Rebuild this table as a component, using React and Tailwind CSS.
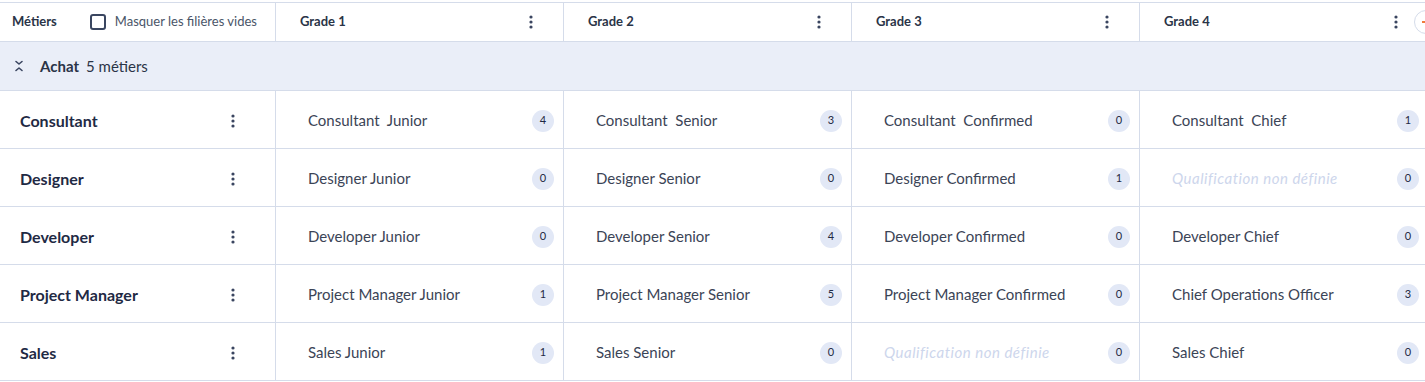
import React from "react";

const grades = ["Grade 1", "Grade 2", "Grade 3", "Grade 4"];

const metiers = [
  {
    name: "Consultant",
    cells: [
      ["Consultant  Junior", 4],
      ["Consultant  Senior", 3],
      ["Consultant  Confirmed", 0],
      ["Consultant  Chief", 1],
    ],
  },
  {
    name: "Designer",
    cells: [
      ["Designer Junior", 0],
      ["Designer Senior", 0],
      ["Designer Confirmed", 1],
      [null, 0],
    ],
  },
  {
    name: "Developer",
    cells: [
      ["Developer Junior", 0],
      ["Developer Senior", 4],
      ["Developer Confirmed", 0],
      ["Developer Chief", 0],
    ],
  },
  {
    name: "Project Manager",
    cells: [
      ["Project Manager Junior", 1],
      ["Project Manager Senior", 5],
      ["Project Manager Confirmed", 0],
      ["Chief Operations Officer", 3],
    ],
  },
  {
    name: "Sales",
    cells: [
      ["Sales Junior", 1],
      ["Sales Senior", 0],
      [null, 0],
      ["Sales Chief", 0],
    ],
  },
];

const Dots = () => (
  <svg width="4" height="14" viewBox="0 0 4 14" className="text-[#3a4560]">
    <circle cx="2" cy="2" r="1.6" fill="currentColor" />
    <circle cx="2" cy="7" r="1.6" fill="currentColor" />
    <circle cx="2" cy="12" r="1.6" fill="currentColor" />
  </svg>
);

const Collapse = () => (
  <svg width="10" height="12" viewBox="0 0 10 12" fill="none" stroke="#3a4560" strokeWidth="1.6" strokeLinecap="round" strokeLinejoin="round">
    <path d="M2 1.5 L5 4 L8 1.5" />
    <path d="M2 10.5 L5 8 L8 10.5" />
  </svg>
);

const Badge = ({ n }) => (
  <span className="flex h-[22px] w-[22px] shrink-0 items-center justify-center rounded-full bg-[#e2e8f6] text-[11px] text-[#1f2a44]">
    {n}
  </span>
);

export default function App() {
  return (
    <div
      className="w-[1425px] h-[382px] overflow-hidden bg-white pt-[2px] text-[#2a3447]"
      style={{ fontFamily: "Lato, 'Noto Sans', sans-serif" }}
    >
      <div className="w-[1428px] border-t border-[#d5dcea]">
        {/* Header */}
        <div className="flex h-[39px] border-b border-[#d5dcea]">
          <div className="flex w-[276px] shrink-0 items-center border-r border-[#d5dcea] pl-[12px]">
            <span className="text-[13px] font-bold">Métiers</span>
            <span className="ml-[33px] h-[16px] w-[16px] rounded-[3px] border-2 border-[#3a4660]" />
            <span className="ml-[9px] text-[13px] text-[#4a5568]">Masquer les filières vides</span>
          </div>
          {grades.map((g, i) => (
            <div
              key={g}
              className={`relative flex w-[288px] shrink-0 items-center justify-between pl-[24px] pr-[30px] ${i < 3 ? "border-r border-[#d5dcea]" : ""}`}
            >
              <span className="text-[13px] font-bold">{g}</span>
              <Dots />
              {i === 3 && (
                <span className="absolute left-[274px] top-[7px] flex h-[24px] w-[24px] items-center justify-center rounded-full border border-[#d5dcea] bg-white">
                  <span className="h-[2px] w-[8px] bg-[#f07a3a]" />
                </span>
              )}
            </div>
          ))}
        </div>

        {/* Group */}
        <div className="flex h-[49px] items-center border-b border-[#d5dcea] bg-[#eaeef8] pl-[14px]">
          <Collapse />
          <span className="ml-[16px] text-[15px] font-bold">Achat</span>
          <span className="ml-[7px] text-[15px]">5 métiers</span>
        </div>

        {/* Rows */}
        {metiers.map((m) => (
          <div key={m.name} className="flex h-[58px] border-b border-[#d5dcea]">
            <div className="flex w-[276px] shrink-0 items-center justify-between border-r border-[#d5dcea] pl-[20px] pr-[40px] pt-[2px]">
              <span className="text-[16px] font-bold text-[#1f2a44]">{m.name}</span>
              <Dots />
            </div>
            {m.cells.map(([label, n], i) => (
              <div
                key={i}
                className={`flex w-[288px] shrink-0 items-center justify-between pl-[32px] pr-[9px] pt-[2px] ${i < 3 ? "border-r border-[#d5dcea]" : ""}`}
              >
                {label ? (
                  <span className="whitespace-pre text-[15px] text-[#3b4456]">{label}</span>
                ) : (
                  <span className="text-[15px] italic tracking-[0.5px] text-[#cdd6ec]">Qualification non définie</span>
                )}
                <Badge n={n} />
              </div>
            ))}
          </div>
        ))}
      </div>
    </div>
  );
}
